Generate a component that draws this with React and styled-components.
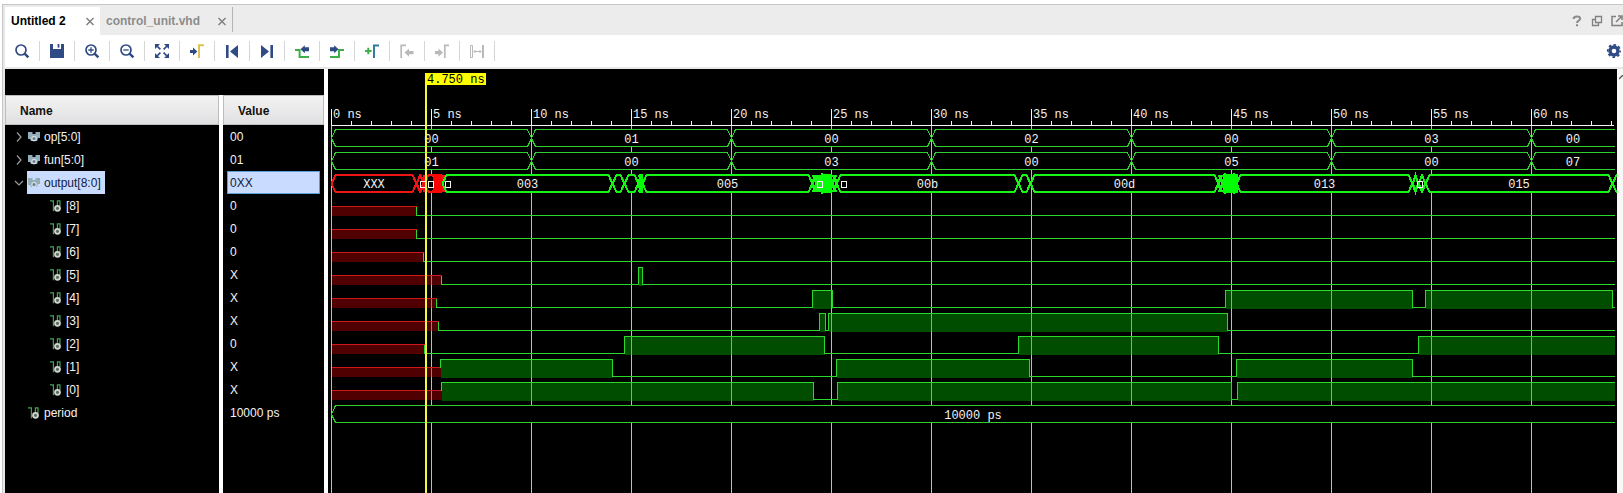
import React from "react";
import styled, { createGlobalStyle, css } from "styled-components";

const GlobalStyle = createGlobalStyle`
  * { box-sizing: border-box; }
  body {
    margin: 0;
    background: #fff;
    font-family: "Liberation Sans", Arial, sans-serif;
    font-size: 12px;
    color: #000;
  }
`;

const ROW_HEIGHT = 23;
const NAVY = "#2f4a85";
const GREEN = "#3fae49";
const TEAL = "#2f7ca0";
const DISABLED = "#b9b9b9";

/* ---------- frame ---------- */

const Frame = styled.main`
  display: flex;
  flex-direction: column;
  min-height: 100vh;
  padding: 4px 0 0 2px;
`;

const Window = styled.div`
  flex: 1;
  display: flex;
  flex-direction: column;
  border-top: 1px solid #c6c6c6;
  border-left: 1px solid #c6c6c6;
  padding-left: 2px;
  background: #e8e8e8;
  overflow: hidden;
`;

/* ---------- tabs ---------- */

const TabBar = styled.nav`
  display: flex;
  height: 30px;
  padding-top: 2px;
  background: #ececec;
`;

const Tab = styled.div`
  display: flex;
  align-items: center;
  justify-content: space-between;
  width: ${(p) => (p.$active ? 95 : 132)}px;
  padding: 0 5px 0 6px;
  background: ${(p) => (p.$active ? "#fff" : "transparent")};
`;

const TabLabel = styled.button`
  padding: 0;
  border: 0;
  background: none;
  font: bold 12px/28px "Liberation Sans", Arial, sans-serif;
  color: ${(p) => (p.$active ? "#000" : "#8c8c8c")};
  white-space: nowrap;
`;

const IconButton = styled.button`
  display: flex;
  align-items: center;
  justify-content: center;
  flex: none;
  padding: 0;
  border: 0;
  background: none;
`;

const TabDivider = styled.span`
  width: 1px;
  height: 25px;
  background: #b4b4b4;
`;

const WindowActions = styled.div`
  display: flex;
  gap: 4px;
  margin-left: auto;
  margin-right: -2px;
  align-items: center;
`;

/* ---------- toolbar ---------- */

const Toolbar = styled.div`
  display: flex;
  align-items: center;
  height: 32px;
  background: #fff;
  margin-bottom: 2px;
`;

const ToolButton = styled(IconButton)`
  width: 35px;
  height: 20px;
  border-right: 1px solid #d6d6d6;
`;

const SettingsButton = styled(IconButton)`
  margin-left: auto;
  margin-right: 1px;
`;

/* ---------- panes ---------- */

const Panes = styled.div`
  flex: 1;
  display: flex;
  background: #fff;
`;

const SignalPane = styled.section`
  flex: none;
  display: flex;
  flex-direction: column;
  width: 319px;
  padding-top: 26px;
  margin-right: 4px;
  background: #000;
`;

const SignalBody = styled.div`
  flex: 1;
  background: linear-gradient(to right, #000 214px, #fff 214px, #fff 218px, #000 218px);
`;

const SignalTable = styled.table`
  width: 100%;
  table-layout: fixed;
  border-collapse: separate;
  border-spacing: 0;
  color: #f4f4f4;
`;

const NameCol = styled.col`
  width: 214px;
`;

const HeadCell = styled.th`
  height: 30px;
  padding: 0;
  text-align: left;
  ${(p) => p.$value && css`border-left: 4px solid #fff;`}
`;

const HeadLabel = styled.div`
  height: 30px;
  padding: 0 14px;
  line-height: 30px;
  color: #111;
  background: linear-gradient(#f3f3f3, #e0e0e2);
  border: 1px solid #bdbdbd;
`;

const NameCell = styled.th`
  height: ${ROW_HEIGHT}px;
  padding: 0;
  text-align: left;
  font-weight: normal;
`;

const ValueCell = styled.td`
  height: ${ROW_HEIGHT}px;
  padding: 0 4px;
  border-left: 4px solid #fff;
`;

const NameLine = styled.div`
  display: flex;
  align-items: center;
  height: ${ROW_HEIGHT}px;
  padding-left: ${(p) => (p.$child ? 44 : 6)}px;
`;

const ExpanderSlot = styled.span`
  display: flex;
  width: 16px;
  justify-content: center;
`;

const NameTag = styled.span`
  display: flex;
  align-items: center;
  gap: 4px;
  height: ${ROW_HEIGHT}px;
  padding: 0 4px 0 1px;
  color: ${(p) => (p.$selected ? "#10203c" : "inherit")};
  background: ${(p) => (p.$selected ? "#c9dcff" : "transparent")};
`;

const ValueBox = styled.div`
  height: ${ROW_HEIGHT}px;
  line-height: 22px;
  padding: 0 2px;
  color: ${(p) => (p.$selected ? "#10203c" : "inherit")};
  background: ${(p) => (p.$selected ? "#c9dcff" : "transparent")};
  border: 1px solid ${(p) => (p.$selected ? "#5b9fd6" : "transparent")};
`;

const WavePane = styled.section`
  flex: 1;
  min-width: 0;
  display: flex;
  background: #000;
`;

const WaveChart = styled.svg`
  flex: 1;
  min-width: 0;
  min-height: 400px;
  font: 12px "Liberation Mono", "Courier New", monospace;
  fill: none;
`;

const WaveText = styled.text`
  fill: ${(p) => (p.$dark ? "#000" : "#f2f2f2")};
  text-anchor: ${(p) => (p.$centered ? "middle" : "start")};
`;

const ScrollStrip = styled.div`
  flex: none;
  width: 6px;
  padding: 5px 0 0 2px;
  background: #f8f8f8;
  overflow: hidden;
`;

/* ---------- icons ---------- */

const Icon = ({ size = 16, children, ...rest }) => (
  <svg width={size} height={size} viewBox={`0 0 ${size} ${size}`} fill="none" aria-hidden="true" {...rest}>
    {children}
  </svg>
);

const Lens = ({ children }) => (
  <Icon stroke={NAVY}>
    <circle cx="7" cy="7" r="5" strokeWidth="1.7" />
    <path d="M10.6 10.6L14.4 14.4" strokeWidth="2.4" />
    {children}
  </Icon>
);

const tools = [
  ["Search", <Lens />],
  ["Save", (
    <Icon fill={NAVY}>
      <path d="M1 1h3v5h8V1h3v14H1z" />
      <path d="M8.6 1h1.8v3.6H8.6z" />
    </Icon>
  )],
  ["Zoom in", <Lens><path d="M4.3 7h5.4M7 4.3v5.4" strokeWidth="1.3" /></Lens>],
  ["Zoom out", <Lens><path d="M4.3 7h5.4" strokeWidth="1.3" /></Lens>],
  ["Zoom fit", (
    <Icon fill={NAVY} stroke={NAVY}>
      <path stroke="none" d="M1 1h5L1 6zM15 1v5l-5-5zM1 15v-5l5 5zM15 15h-5l5-5z" />
      <path strokeWidth="1.7" d="M3 3l3.4 3.4M13 3L9.6 6.4M3 13l3.4-3.4M13 13L9.6 9.6" />
    </Icon>
  )],
  ["Go to cursor", (
    <Icon>
      <path fill={NAVY} d="M1 7h3V4.6L8.4 8.5 4 12.4V10H1z" />
      <path stroke="#dcc256" strokeWidth="2" d="M10 15V2.2h5" />
    </Icon>
  )],
  ["Go to time 0", <Icon fill={NAVY}><path d="M2 2h2.6v13H2zM14 2v13L6 8.5z" /></Icon>],
  ["Go to last time", <Icon fill={NAVY}><path d="M2 2v13l8-6.5zM11.4 2H14v13h-2.6z" /></Icon>],
  ["Previous transition", (
    <Icon>
      <path stroke={GREEN} strokeWidth="2" d="M1 7h4.6v7H15" />
      <path fill={NAVY} d="M6.5 6.2L10.8 2.2v2H15v4h-4.2v2z" />
    </Icon>
  )],
  ["Next transition", (
    <Icon>
      <path stroke={GREEN} strokeWidth="2" d="M1 14h9V7h5" />
      <path fill={NAVY} d="M9.5 6.2L5.2 2.2v2H1v4h4.2v2z" />
    </Icon>
  )],
  ["Add marker", (
    <Icon>
      <path stroke={GREEN} strokeWidth="2" d="M1 8h6.6M4.3 4.7v6.6" />
      <path stroke={TEAL} strokeWidth="2" d="M10 15V2.4h5" />
    </Icon>
  )],
  ["Previous marker", (
    <Icon>
      <path stroke={DISABLED} strokeWidth="1.7" d="M2.2 15V2.4H7" />
      <path fill={DISABLED} d="M5.5 9.6l4.500-4.200V8h4.500v3.200H10v2.600z" />
    </Icon>
  ), true],
  ["Next marker", (
    <Icon>
      <path fill={DISABLED} d="M9 9.600l-4.500-4.200V8H1v3.200h3.500v2.600z" />
      <path stroke={DISABLED} strokeWidth="1.7" d="M10.8 15V2.400H15" />
    </Icon>
  ), true],
  ["Swap cursors", (
    <Icon stroke={DISABLED}>
      <path d="M1.5 2.500h2v12h-2z" />
      <path strokeWidth="2" d="M14 2v13" />
      <path d="M5 8.500h7M6.500 7L5 8.500 6.500 10M10.500 7L12 8.500 10.500 10" />
    </Icon>
  ), true],
];

const CloseIcon = () => (
  <Icon size={10} stroke="#7d7d7d">
    <path strokeWidth="1.4" d="M1.5 2l7 7M8.500 2l-7 7" />
  </Icon>
);

const GearIcon = () => (
  <Icon stroke={NAVY}>
    <circle cx="8" cy="8" r="4" strokeWidth="3.400" />
    <circle cx="8" cy="8" r="6.200" strokeWidth="1.800" strokeDasharray="2.600 2.270" strokeDashoffset="1.300" />
  </Icon>
);

const BusIcon = () => (
  <Icon size={12}>
    <path fill="#93adbb" d="M0 1h4.500v2h3V1H12v6h-2l-1 3H3L2 8H0z" />
    <circle cx="6" cy="7.500" r="2.200" fill="#6d7f8b" stroke="#d3dde2" strokeWidth="1.300" />
  </Icon>
);

const BitIcon = () => (
  <Icon size={12}>
    <path stroke="#45a255" strokeWidth="1.200" d="M0 .8h3.400v10.400M7.400 6V.8H10V6" />
    <circle cx="7.500" cy="8.300" r="2.500" fill="#5b6b5e" stroke="#cfd6cf" strokeWidth="1.800" />
  </Icon>
);

const Chevron = ({ open }) => (
  <Icon size={10} stroke="#9c9c9c">
    <path strokeWidth="1.200" d={open ? "M1 3l4 4 4-4" : "M3 .500l4 4.500-4 4.500"} />
  </Icon>
);

/* ---------- signals ---------- */

const PX_PER_NS = 20;
const ORIGIN = 3;
const END = 1283;

// Edges are pixel distances from 0 ns.
const signals = [
  { name: "op[5:0]", value: "00", kind: "bus", edges: [0, 200, 400, 600, 800, 1000, 1200, END], labels: ["00", "01", "00", "02", "00", "03", "00"] },
  { name: "fun[5:0]", value: "01", kind: "bus", edges: [0, 200, 400, 600, 800, 1000, 1200, END], labels: ["01", "00", "03", "00", "05", "00", "07"] },
  {
    name: "output[8:0]", value: "0XX", kind: "bus", wide: true, open: true, selected: true,
    unknown: [0, 85, 92, 93, 105, 107, 109, 110],
    unknownLabels: { 0: "XXX" },
    edges: [111, 281, 293, 307, 311, 481, 485, 488, 493, 497, 501, 505, 687, 699, 887, 891, 896, 900, 905, 1081, 1087, 1094, 1281, 1291],
    labels: { 0: "003", 4: "005", 11: "00b", 13: "00d", 18: "013", 21: "015" },
    solids: [[489, 500], [891, 906], [307, 311]],
    unknownSolid: [101, 110],
    boxes: [91, 99, 116, 488, 512, 1088],
  },
  { name: "[8]", value: "0", unknownTo: 85, highs: [] },
  { name: "[7]", value: "0", unknownTo: 85, highs: [] },
  { name: "[6]", value: "0", unknownTo: 92, highs: [] },
  { name: "[5]", value: "X", unknownTo: 110, highs: [[307, 311]] },
  { name: "[4]", value: "X", unknownTo: 105, highs: [[481, 501], [894, 1081], [1094, 1281]] },
  { name: "[3]", value: "X", unknownTo: 107, highs: [[488, 494], [497, 896]] },
  { name: "[2]", value: "0", unknownTo: 93, highs: [[293, 493], [687, 887], [1087, END]] },
  { name: "[1]", value: "X", unknownTo: 109, highs: [[109, 281], [505, 698], [905, 1081]] },
  { name: "[0]", value: "X", unknownTo: 110, highs: [[110, 482], [506, 900], [906, END]] },
  { name: "period", value: "10000 ps", kind: "bus", edges: [0, END], labels: ["10000 ps"], leaf: true },
];

const SLANT = 4;

function BusCells({ edges, labels, color, strokeWidth }) {
  return edges.slice(0, -1).map((from, i) => {
    const to = edges[i + 1];
    const slant = Math.min(SLANT, (to - from) / 2);
    const outline = to === END
      ? `M${to} 4H${from + slant}L${from} 13L${from + slant} 21H${to}`
      : `M${from} 13L${from + slant} 4H${to - slant}L${to} 13L${to - slant} 21H${from + slant}Z`;
    return (
      <g key={from}>
        <path d={outline} fill="#000" stroke={color} strokeWidth={strokeWidth} />
        {labels[i] && <WaveText $centered x={(from + to) / 2} y="17">{labels[i]}</WaveText>}
      </g>
    );
  });
}

// Each value change of a wide bus is drawn as a full-width cross, so close changes overlap.
function BusCrossings({ edges, color }) {
  const d = edges.slice(1).map((x) => `M${x - SLANT} 4L${x + SLANT} 21M${x + SLANT} 4L${x - SLANT} 21`).join("");
  return <path d={d} stroke={color} strokeWidth="2" />;
}

function BusWave({ signal }) {
  const color = signal.wide ? "#16f516" : "#2fcf2f";
  const strokeWidth = signal.wide ? 2 : 1;
  return (
    <>
      {signal.unknown && (
        <>
          <BusCells edges={signal.unknown} labels={signal.unknownLabels} color="#f01414" strokeWidth={2} />
          <BusCrossings edges={signal.unknown.slice(0, -1)} color="#f01414" />
          <rect x={signal.unknownSolid[0]} y="3" width={signal.unknownSolid[1] - signal.unknownSolid[0]} height="19" fill="#ff0000" />
        </>
      )}
      <BusCells edges={signal.edges} labels={signal.labels} color={color} strokeWidth={strokeWidth} />
      {signal.wide && <BusCrossings edges={signal.edges} color={color} />}
      {signal.solids?.map(([a, b]) => <rect key={a} x={a} y="3" width={b - a} height="19" fill="#00ff00" />)}
      {signal.boxes?.map((x) => <rect key={x} x={x - 2} y="10" width="5" height="6" stroke="#f4f4f4" />)}
    </>
  );
}

function BitWave({ signal }) {
  const { unknownTo, highs } = signal;
  let line = `M${unknownTo} 12`;
  if (!(highs[0] && highs[0][0] === unknownTo)) line += "V21";
  highs.forEach(([a, b]) => {
    line += `H${a}V4H${b}`;
    if (b !== END) line += "V21";
  });
  line += `H${END}`;
  return (
    <>
      <rect x="0" y="12" width={unknownTo} height="9" fill="#c80000" fillOpacity="0.4" />
      <path d={`M0 12H${unknownTo}`} stroke="#d01818" />
      {highs.map(([a, b]) => (
        <rect key={a} x={a} y="4" width={b - a} height="18" fill="#00c000" fillOpacity="0.4" />
      ))}
      <path d={line} stroke="#2bd92b" />
    </>
  );
}

function Waveform() {
  const ticks = Array.from({ length: 65 }, (_, ns) => ns);
  const majors = ticks.filter((ns) => ns % 5 === 0);
  return (
    <WaveChart role="img" aria-label="Waveform" shapeRendering="crispEdges">
      <g transform={`translate(${ORIGIN} 0)`}>
        {majors.map((ns) => (
          <rect key={ns} x={ns * PX_PER_NS} y="56" width="1" height="100%" fill="#bcbcbc" />
        ))}
        {ticks.map((ns) => {
          const top = ns % 5 === 0 ? 40 : 52;
          return <rect key={ns} x={ns * PX_PER_NS} y={top} width="1" height={57 - top} fill="#f4f4f4" />;
        })}
        <rect x="0" y="56" width={END} height="1" fill="#f4f4f4" />
        {majors.map((ns) => (
          <WaveText key={ns} x={ns * PX_PER_NS + 2} y="49">{`${ns} ns`}</WaveText>
        ))}
        {signals.map((signal, i) => (
          <g key={signal.name} transform={`translate(0.5 ${56 + i * ROW_HEIGHT + (signal.wide ? 0 : 0.5)})`}>
            {signal.kind === "bus" ? <BusWave signal={signal} /> : <BitWave signal={signal} />}
          </g>
        ))}
        <rect x="94" y="4" width="2" height="100%" fill="#f6f63c" />
        <rect x="94" y="4" width="61" height="12" fill="#ffff00" />
        <WaveText $dark x="96" y="14">4.750 ns</WaveText>
      </g>
    </WaveChart>
  );
}

function SignalRow({ signal }) {
  const isBit = signal.kind !== "bus";
  return (
    <tr>
      <NameCell scope="row">
        <NameLine $child={isBit}>
          {!isBit && (
            <ExpanderSlot>
              {!signal.leaf && (
                <IconButton aria-label={`Toggle ${signal.name}`} aria-expanded={!!signal.open}>
                  <Chevron open={signal.open} />
                </IconButton>
              )}
            </ExpanderSlot>
          )}
          <NameTag $selected={signal.selected}>
            {isBit || signal.leaf ? <BitIcon /> : <BusIcon />}
            {signal.name}
          </NameTag>
        </NameLine>
      </NameCell>
      <ValueCell>
        <ValueBox $selected={signal.selected}>{signal.value}</ValueBox>
      </ValueCell>
    </tr>
  );
}

export default function App() {
  return (
    <Frame>
      <GlobalStyle />
      <Window>
        <TabBar>
          <Tab $active>
            <TabLabel $active>Untitled 2</TabLabel>
            <IconButton aria-label="Close Untitled 2"><CloseIcon /></IconButton>
          </Tab>
          <Tab>
            <TabLabel>control_unit.vhd</TabLabel>
            <IconButton aria-label="Close control_unit.vhd"><CloseIcon /></IconButton>
          </Tab>
          <TabDivider />
          <WindowActions>
            <IconButton aria-label="Help">
              <Icon stroke="#8a8a8a">
                <path strokeWidth="2" d="M4.600 6C4.600 2.600 11.200 2.600 11.200 5.600 11.200 7.600 8 7.600 8 10" />
                <path strokeWidth="2" d="M8 11.200v2" />
              </Icon>
            </IconButton>
            <IconButton aria-label="Restore">
              <Icon stroke="#808080" strokeWidth="1.300">
                <path d="M6.500 3.500h6v6h-6zM6 6.500H3.500v6h6V10" />
              </Icon>
            </IconButton>
            <IconButton aria-label="Float">
              <Icon stroke="#808080" strokeWidth="1.500">
                <path d="M7 3.500H3v9h10V9M7 9l5-5M9 3h4v4" />
              </Icon>
            </IconButton>
          </WindowActions>
        </TabBar>
        <Toolbar role="toolbar">
          {tools.map(([label, icon, disabled]) => (
            <ToolButton key={label} aria-label={label} disabled={disabled}>{icon}</ToolButton>
          ))}
          <SettingsButton aria-label="Settings"><GearIcon /></SettingsButton>
        </Toolbar>
        <Panes>
          <SignalPane>
            <SignalBody>
              <SignalTable>
                <colgroup>
                  <NameCol />
                  <col />
                </colgroup>
                <thead>
                  <tr>
                    <HeadCell scope="col"><HeadLabel>Name</HeadLabel></HeadCell>
                    <HeadCell scope="col" $value><HeadLabel>Value</HeadLabel></HeadCell>
                  </tr>
                </thead>
                <tbody>
                  {signals.map((signal) => <SignalRow key={signal.name} signal={signal} />)}
                </tbody>
              </SignalTable>
            </SignalBody>
          </SignalPane>
          <WavePane>
            <Waveform />
          </WavePane>
          <ScrollStrip>
            <Icon size={10} stroke="#555"><path d="M0 4l4-4 4 4" strokeWidth="1.300" /></Icon>
          </ScrollStrip>
        </Panes>
      </Window>
    </Frame>
  );
}
